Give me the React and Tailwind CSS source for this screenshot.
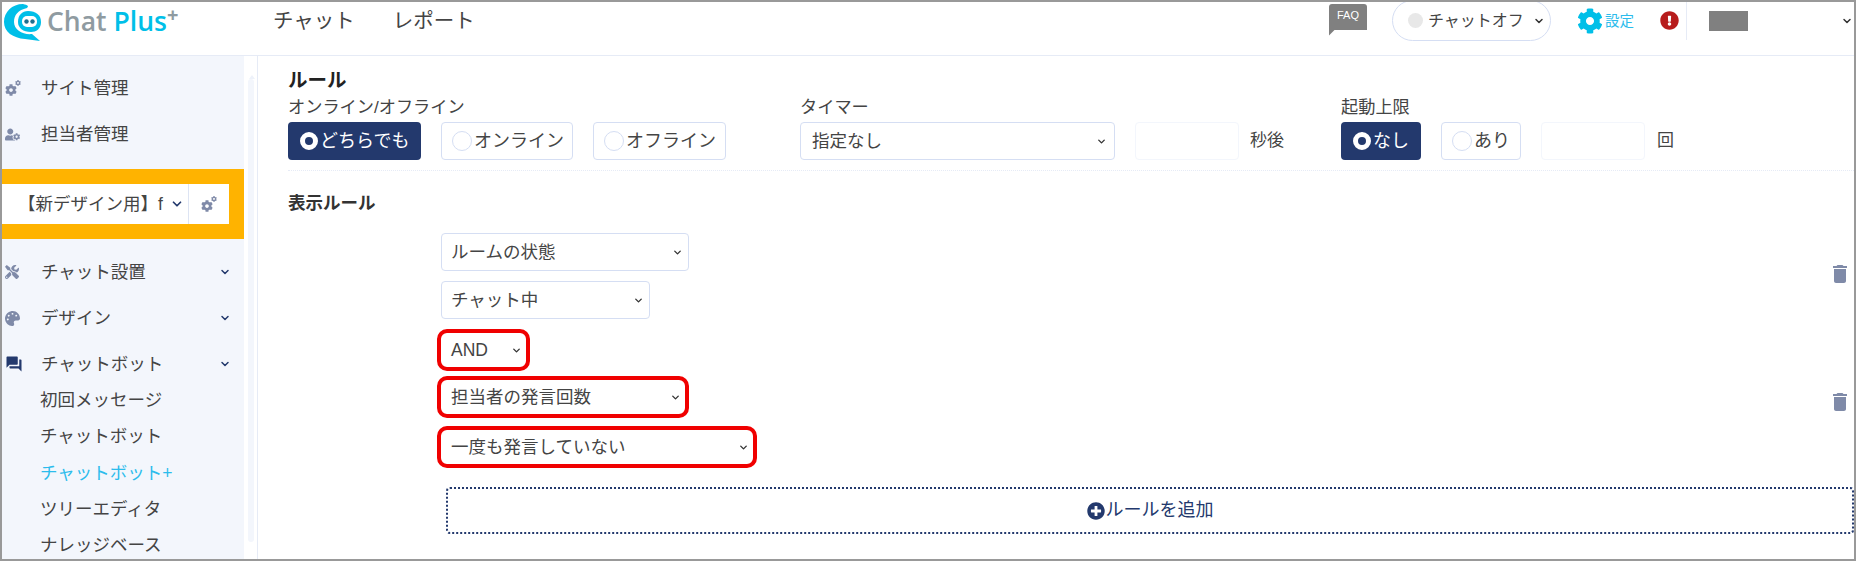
import React from 'react';
import { ChevronDown } from 'lucide-react';
import { FaCog, FaUserCog, FaTools, FaPalette, FaExclamationCircle, FaPlusCircle } from 'react-icons/fa';
import { MdForum, MdDelete } from 'react-icons/md';

const font = { fontFamily: '"Liberation Sans", "Noto Sans CJK JP", sans-serif' };

function Chevron({ size = 14, className = '' }) {
  return <ChevronDown size={size} strokeWidth={3} className={'shrink-0 ' + className} />;
}

// big gear with a small one at the top right
function Cogs({ className = '' }) {
  return (
    <span className={'relative inline-block w-[16px] h-[16px] text-[#7f8aa8] ' + className}>
      <FaCog size={12} className="absolute left-0 bottom-0" />
      <FaCog size={6} className="absolute right-0 top-0" />
    </span>
  );
}

function Logo() {
  return (
    <div className="flex items-start h-full pl-[1px] pt-[1px]">
      <svg width="38" height="38" viewBox="0 0 38 38" className="shrink-0">
        <path d="M20 1 C9 1 1 9 1 19 C1 29 10 35 22 36 L37 38 L29 31 C20 32 11 27 11 19 C11 12 15 7 24 5 C26 3 25 2 20 1 Z" fill="#00bfe8" />
        <path d="M25 8 C33 8 38 12 38 19 C38 26 33 29 28 29 C20 29 15 25 15 19 C15 12 19 8 25 8 Z" fill="#00bfe8" />
        <rect x="19" y="13" width="15" height="11" rx="5" fill="#fff" />
        <circle cx="23.5" cy="18.5" r="2.2" fill="#1f6f8f" />
        <circle cx="29.5" cy="18.5" r="2.2" fill="#1f6f8f" />
      </svg>
      <div className="flex items-start ml-[6px] mt-[2px] text-[26.5px] leading-[32px] font-semibold" style={{ fontFamily: '"Open Sans", sans-serif' }}>
        <span className="text-[#8f9ba1]">Chat</span>
        <span className="text-[#00bfe8] ml-[7px]">Plus</span>
        <span className="text-[#8f9ba1] text-[20px] leading-[20px] font-bold">+</span>
      </div>
    </div>
  );
}

function Header() {
  return (
    <header className="flex items-start h-[54px] shrink-0 border-b border-[#e6ebf6] bg-white">
      <div className="w-[271px] h-full shrink-0"><Logo /></div>
      <nav className="flex items-center h-[38px] gap-[38px] text-[20.5px] text-[#444]">
        <span>チャット</span>
        <span>レポート</span>
      </nav>
      <div className="ml-auto flex items-center h-[41px] -mt-[2px]">
        <div className="relative w-[38px] h-[32px] mr-[25px] -mt-[2px]">
          <div className="h-[26px] bg-[#808080] rounded-t-[3px] text-white text-[11px] leading-[22px] text-center">FAQ</div>
          <div className="absolute left-0 bottom-0 w-[6px] h-[6px] bg-[#808080] [clip-path:polygon(0_0,100%_0,0_100%)]" />
        </div>
        <div className="flex items-center w-[159px] h-[41px] rounded-[21px] border border-[#d5def3] pl-[15px] text-[#444]">
          <span className="w-[15px] h-[15px] rounded-full bg-[#e8e8e8]" />
          <span className="ml-[5px] text-[16px] leading-[20px]">チャットオフ</span>
          <Chevron size={12} className="ml-[9px] text-[#333]" />
        </div>
        <FaCog size={26} className="ml-[26px] text-[#00bfe8]" />
        <span className="ml-[2px] text-[14.5px] leading-[20px] text-[#2cbcec]">設定</span>
        <FaExclamationCircle size={19} className="ml-[26px] text-[#b71c1c]" />
        <div className="ml-[7px] w-px h-[38px] bg-[#e6ebf6]" />
        <div className="ml-[22px] w-[39px] h-[20px] bg-[#808080]" />
        <Chevron size={12} className="ml-[93px] mr-[1px] text-[#333]" />
      </div>
    </header>
  );
}

function SideItem({ icon, label, chevron }) {
  return (
    <div className="flex items-center h-[46px] pl-[3px] text-[17.5px] text-[#444]">
      <span className="w-[36px] shrink-0 flex items-center">{icon}</span>
      <span>{label}</span>
      {chevron && <Chevron size={12} className="ml-auto mr-[13px] text-[#23396d]" />}
    </div>
  );
}

function Sidebar() {
  return (
    <aside className="flex shrink-0 h-full">
      <div className="w-[242px] bg-[#f3f6fc] overflow-hidden pt-[9px]">
        <SideItem icon={<Cogs />} label="サイト管理" />
        <SideItem icon={<FaUserCog size={15} className="text-[#7f8aa8]" />} label="担当者管理" />
        <div className="flex items-center h-[70px] mt-[12px] bg-[#ffb300]">
          <div className="flex items-center w-[186px] h-[40px] bg-white pl-[16px] pr-[4px] text-[17.5px] text-[#444] whitespace-nowrap">
            <span className="w-[146px]">【新デザイン用】f</span>
            <Chevron size={14} className="ml-auto text-[#23396d]" />
          </div>
          <div className="flex items-center justify-center w-[41px] h-[40px] bg-white border-l border-[#dde4f3]">
            <Cogs />
          </div>
        </div>
        <div className="pt-[10px]">
          <SideItem icon={<FaTools size={14} className="text-[#7f8aa8]" />} label="チャット設置" chevron />
          <SideItem icon={<FaPalette size={15} className="text-[#7f8aa8]" />} label="デザイン" chevron />
          <SideItem icon={<MdForum size={18} className="text-[#23396d]" />} label="チャットボット" chevron />
        </div>
        <ul className="pl-[38px] -mt-[5px] text-[17.5px] text-[#444]">
          <li className="h-[36.3px] leading-[36px]">初回メッセージ</li>
          <li className="h-[36.3px] leading-[36px]">チャットボット</li>
          <li className="h-[36.3px] leading-[36px] text-[#2cbcec]">チャットボット+</li>
          <li className="h-[36.3px] leading-[36px]">ツリーエディタ</li>
          <li className="h-[36.3px] leading-[36px]">ナレッジベース</li>
        </ul>
      </div>
      <div className="w-[14px] h-full bg-white border-r border-[#e6ebf6] pl-[4px] pt-[19px] pr-[3px] flex flex-col">
        <div className="w-0 h-0 ml-[1px] border-x-[3px] border-x-transparent border-b-[4px] border-b-[#eef2fa]" />
        <div className="w-[6px] h-[463px] mt-[-4px] translate-y-[4px] rounded-[3px] bg-[#f3f6fc]" />
      </div>
    </aside>
  );
}

function Radio({ label, active, width }) {
  return (
    <div
      className={
        'flex items-center h-[38px] rounded-[4px] text-[18px] ' +
        width +
        (active ? ' bg-[#23396d] text-white pl-[12px]' : ' bg-white border border-[#d5def3] text-[#444] pl-[10px]')
      }
    >
      {active ? (
        <span className="w-[18px] h-[18px] rounded-full border-[5px] border-white shrink-0" />
      ) : (
        <span className="w-[20px] h-[20px] rounded-full border border-[#d5def3] shrink-0" />
      )}
      <span className="ml-[2px]">{label}</span>
    </div>
  );
}

function Select({ label, width, red }) {
  return (
    <div
      className={
        'flex items-center bg-white text-[17.5px] text-[#444] ' +
        width +
        (red
          ? ' h-[42px] border-[4px] border-[#f00000] rounded-[10px] pl-[10px] pr-[4px]'
          : ' h-[38px] ml-[4px] border border-[#d5def3] rounded-[4px] pl-[9px] pr-[5px]')
      }
    >
      <span>{label}</span>
      <Chevron size={11} className="ml-auto text-[#333]" />
    </div>
  );
}

function Field({ label, children, className = '' }) {
  return (
    <div className={className}>
      <div className="h-[30px] leading-[30px] text-[17.2px] text-[#444]">{label}</div>
      <div className="flex items-center">{children}</div>
    </div>
  );
}

function Main() {
  return (
    <main className="flex-1 min-w-0 pt-[12px] bg-white overflow-hidden">
      <div className="pl-[30px]">
        <h2 className="h-[24px] leading-[24px] text-[19.5px] font-bold text-[#222]">ルール</h2>
        <div className="flex">
          <Field label="オンライン/オフライン" className="w-[512px]">
            <div className="flex gap-[20px]">
              <Radio label="どちらでも" active width="w-[133px]" />
              <Radio label="オンライン" width="w-[132px]" />
              <Radio label="オフライン" width="w-[133px]" />
            </div>
          </Field>
          <Field label="タイマー" className="w-[541px]">
            <div className="flex items-center justify-between w-[315px] h-[38px] border border-[#d5def3] rounded-[4px] pl-[11px] pr-[7px] text-[17.5px] text-[#444]">
              <span>指定なし</span>
              <Chevron size={11} className="text-[#333]" />
            </div>
            <div className="w-[104px] h-[38px] ml-[20px] border border-[#f3f6fc] rounded-[4px]" />
            <span className="ml-[11px] text-[17px] text-[#444]">秒後</span>
          </Field>
          <Field label="起動上限">
            <Radio label="なし" active width="w-[80px]" />
            <div className="w-[20px]" />
            <Radio label="あり" width="w-[80px]" />
            <div className="w-[104px] h-[38px] ml-[20px] border border-[#f3f6fc] rounded-[4px]" />
            <span className="ml-[12px] text-[17px] text-[#444]">回</span>
          </Field>
        </div>
      </div>
      <div className="ml-[30px] mt-[10px] border-t border-dotted border-[#e6ebf6]" />
      <h3 className="ml-[30px] mt-[20px] h-[24px] leading-[24px] text-[17.5px] font-bold text-[#333]">表示ルール</h3>
      <div className="ml-[179px] mt-[18px]">
        <div className="flex items-center justify-between pr-[2px]">
          <div className="flex flex-col gap-[10px]">
            <Select label="ルームの状態" width="w-[248px]" />
            <Select label="チャット中" width="w-[209px]" />
          </div>
          <MdDelete size={24} className="text-[#7f8aa8] -mt-[5px]" />
        </div>
        <div className="flex items-center justify-between pr-[2px] mt-[10px]">
          <div className="flex flex-col">
            <Select label="AND" width="w-[93px]" red />
            <Select label="担当者の発言回数" width="w-[252px] mt-[5px]" red />
            <Select label="一度も発言していない" width="w-[320px] mt-[8px]" red />
          </div>
          <MdDelete size={24} className="text-[#7f8aa8] mt-[6px]" />
        </div>
        <div className="flex items-center justify-center gap-[1px] ml-[9px] mt-[19px] h-[47px] border-2 border-dotted border-[#23396d] rounded-[4px] text-[18px] text-[#23396d]">
          <FaPlusCircle size={18} />
          <span>ルールを追加</span>
        </div>
      </div>
    </main>
  );
}

export default function App() {
  return (
    <div className="w-[1856px] h-[561px] flex flex-col bg-white border-t-2 border-b-2 border-l-2 border-r-2 border-[#999] overflow-hidden" style={font}>
      <Header />
      <div className="flex flex-1 min-h-0">
        <Sidebar />
        <Main />
      </div>
    </div>
  );
}
